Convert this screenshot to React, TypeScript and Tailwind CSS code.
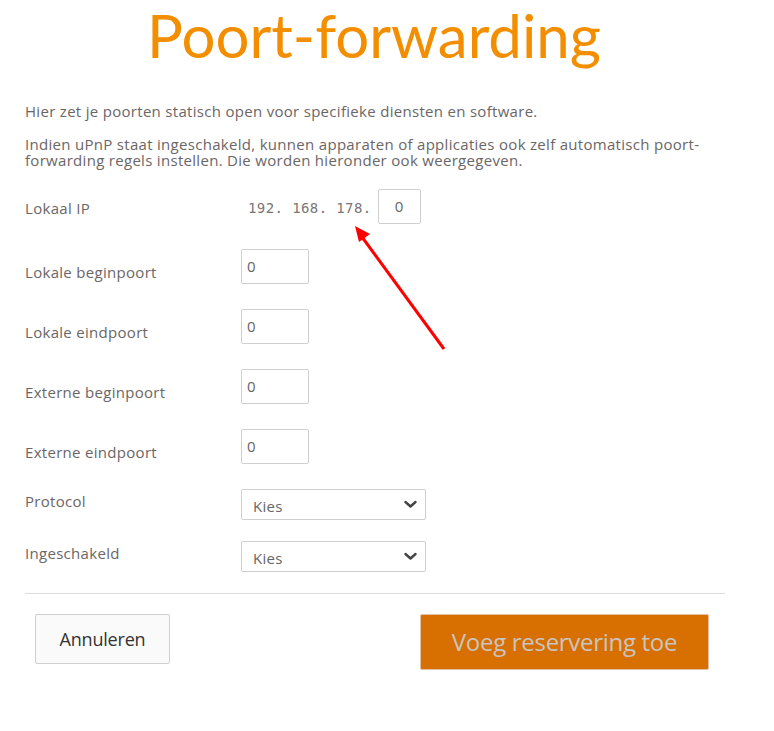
import React from "react";

const labelCls = "w-[216px] shrink-0 text-[15px] leading-[20px] tracking-[0.3px] text-[#6b6666]";

function NumInput() {
  return (
    <div className="w-[68px] h-[35px] border border-[#cfcfcf] rounded-[2px] pl-[5px] pt-[6px] text-[15px] leading-[20px] text-[#666]">
      0
    </div>
  );
}

function Select() {
  return (
    <div className="w-[185px] h-[31px] border border-[#cfcfcf] rounded-[2px] flex items-center justify-between pl-[11px] pr-[8px] text-[15px] tracking-[0.3px] text-[#666]">
      <span className="pt-[2px]">Kies</span>
      <svg width="13" height="9" viewBox="0 0 13 9">
        <path d="M1.5 2 L6.5 6.5 L11.5 2" fill="none" stroke="#444" strokeWidth="2.4" strokeLinecap="round" strokeLinejoin="round" />
      </svg>
    </div>
  );
}

export default function App() {
  return (
    <div className="relative w-[774px] h-[731px] bg-white" style={{ fontFamily: "'Open Sans', Lato, sans-serif" }}>
      <h1 className="text-center text-[60px] leading-[70px] text-[#f28e00] pr-[26px]" style={{ fontFamily: "Lato, sans-serif" }}>
        Poort-forwarding
      </h1>
      <div className="w-[700px] ml-[25px] text-[15px] leading-[16px] tracking-[0.3px] text-[#6b6666]">
        <p className="mt-[33px]">Hier zet je poorten statisch open voor specifieke diensten en software.</p>
        <p className="mt-[17px]">
          Indien uPnP staat ingeschakeld, kunnen apparaten of applicaties ook zelf automatisch poort-forwarding regels instellen. Die worden hieronder ook weergegeven.
        </p>

        <div className="mt-[21px] flex flex-col">
          <div className="flex h-[35px]">
            <div className={labelCls + " pt-[9px]"}>Lokaal IP</div>
            <div className="flex items-start">
              <span className="pl-[7px] pt-[9px] text-[14px] leading-[20px] tracking-[0.4px] text-[#7a7575]" style={{ fontFamily: "'DejaVu Sans Mono', monospace" }}>
                192. 168. 178.
              </span>
              <div className="ml-[6px] w-[43px] h-[35px] border border-[#cfcfcf] rounded-[2px] flex items-center justify-center text-[15px] text-[#666] pb-[2px]">
                0
              </div>
            </div>
          </div>

          {["Lokale beginpoort", "Lokale eindpoort", "Externe beginpoort", "Externe eindpoort"].map((l) => (
            <div key={l} className="flex h-[35px] mt-[25px]">
              <div className={labelCls + " pt-[13px]"}>{l}</div>
              <NumInput />
            </div>
          ))}

          <div className="flex h-[31px] mt-[25px]">
            <div className={labelCls + " pt-[2px]"}>Protocol</div>
            <Select />
          </div>
          <div className="flex h-[31px] mt-[21px]">
            <div className={labelCls + " pt-[2px]"}>Ingeschakeld</div>
            <Select />
          </div>
        </div>

        <div className="mt-[21px] border-t border-[#dcdcdc]" />

        <div className="mt-[20px] flex justify-between pl-[10px] pr-[16px] items-start tracking-normal" style={{ fontFamily: "'Open Sans', sans-serif" }}>
          <button className="w-[135px] h-[50px] bg-[#fafafa] border border-[#cfcfcf] rounded-[2px] text-[18px] text-[#333] tracking-[-0.2px]">
            Annuleren
          </button>
          <button className="w-[289px] h-[56px] bg-[#d77000] border border-[#e0c0a0] rounded-[2px] text-[24px] text-[#c9c4c0] tracking-[-0.3px]">
            Voeg reservering toe
          </button>
        </div>
      </div>

      <svg className="absolute left-0 top-0 pointer-events-none" width="774" height="731">
        <line x1="444" y1="349" x2="362" y2="237" stroke="#ff0000" strokeWidth="3" />
        <polygon points="355,226 370,234 359,242" fill="#ff0000" />
      </svg>
    </div>
  );
}
